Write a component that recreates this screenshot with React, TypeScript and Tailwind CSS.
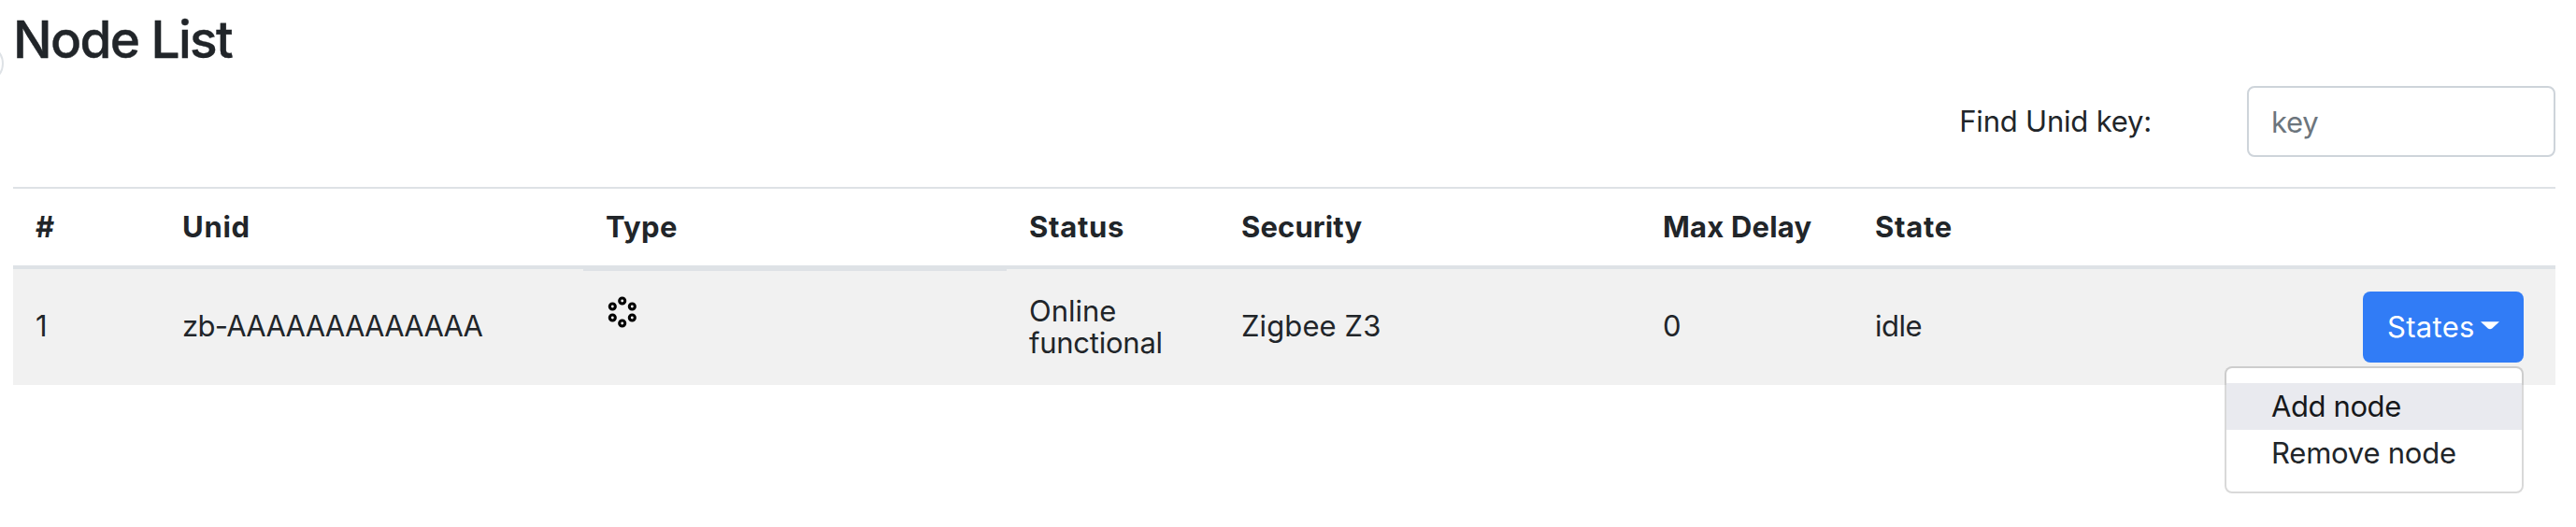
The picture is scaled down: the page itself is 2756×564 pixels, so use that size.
import type { ReactNode } from "react";

const columns = "grid grid-cols-[157px_453px_453px_227px_451px_227px_752px]";

function HeaderCell({ children, className = "" }: { children?: ReactNode; className?: string }) {
  return <div className={`flex items-center px-6 font-bold ${className}`}>{children}</div>;
}

function Cell({ children, className = "" }: { children?: ReactNode; className?: string }) {
  return <div className={`flex items-center px-6 pb-[2px] ${className}`}>{children}</div>;
}

function ZigbeeIcon() {
  const dots = [
    [17.7, 6],
    [28.3, 12],
    [28.3, 24],
    [17.7, 30],
    [7.3, 24],
    [7.3, 12],
  ];
  return (
    <svg width="36" height="36" viewBox="0 0 36 36" fill="none" stroke="#000" strokeWidth="3.1">
      {dots.map(([cx, cy]) => (
        <circle key={`${cx}-${cy}`} cx={cx} cy={cy} r="3" />
      ))}
    </svg>
  );
}

function StatesDropdown() {
  return (
    <div className="relative">
      <button
        type="button"
        className="flex h-[76px] w-[172px] items-center rounded-[8px] bg-[#317cf6] pl-[26px] text-white"
      >
        <span className="tracking-[0.3px]">States</span>
        <svg className="mb-[4px] ml-[6px]" width="20" height="9" viewBox="0 0 20 9" fill="#fff">
          <path d="M0 0.3H20L12.2 7.6Q10 9 7.8 7.6Z" />
        </svg>
      </button>
      <ul className="absolute right-0 top-[80px] flex h-[136px] w-[320px] flex-col rounded-[8px] border-2 border-black/15 bg-white bg-clip-padding pt-4">
        <li className="flex h-[50px] items-center bg-[#e9eaef] pl-[48px] tracking-[-0.4px] text-[#16181b]">Add node</li>
        <li className="flex h-[50px] items-center pl-[48px] tracking-[-0.22px]">Remove node</li>
      </ul>
    </div>
  );
}

export default function App() {
  return (
    <div className="relative h-[564px] w-[2756px] overflow-hidden bg-white pl-[14px] pr-[22px] pt-[10px] font-['Inter',sans-serif] text-[31px] leading-[34px] text-[#212529]">
      <div className="absolute -left-[38px] top-[47px] size-[42px] rounded-full border-2 border-[#dee2e6]" />
      <h1 className="h-[64px] text-[55px] font-medium leading-[64px] tracking-[-1.66px] [-webkit-text-stroke:0.4px_#212529]">
        Node List
      </h1>

      <div className="mt-[18px] flex h-[76px] items-center justify-end">
        <label htmlFor="unid-key" className="mr-[102px] tracking-[-0.2px]">
          Find Unid key:
        </label>
        <input
          id="unid-key"
          placeholder="key"
          className="h-[76px] w-[330px] rounded-[8px] border-2 border-[#ced4da] bg-white pl-[24px] tracking-[-0.29px] placeholder:text-[#6c757d]"
        />
      </div>

      <div className="mt-[32px]">
        <div className={`${columns} h-[88px] border-b-4 border-t-2 border-[#dee2e6]`}>
          <HeaderCell>#</HeaderCell>
          <HeaderCell className="tracking-[0.7px]">Unid</HeaderCell>
          <HeaderCell className="tracking-[0.35px]">Type</HeaderCell>
          <HeaderCell className="tracking-[0.7px]">Status</HeaderCell>
          <HeaderCell className="tracking-[0.13px]">Security</HeaderCell>
          <HeaderCell className="tracking-[0.2px]">Max Delay</HeaderCell>
          <HeaderCell className="tracking-[0.75px]">State</HeaderCell>
        </div>
        <div className={`${columns} h-[124px] bg-[#f1f1f1]`}>
          <Cell>1</Cell>
          <Cell className="tracking-[-0.72px]">zb-AAAAAAAAAAAAA</Cell>
          <div className="border-t-2 border-[#dee2e6] px-6 pt-[26px]">
            <ZigbeeIcon />
          </div>
          <div className="flex flex-col justify-center pl-6">
            <span>Online</span>
            <span className="tracking-[-0.25px]">functional</span>
          </div>
          <Cell className="tracking-[0.1px]">Zigbee Z3</Cell>
          <Cell>0</Cell>
          <div className="flex items-center justify-between pb-[2px] pl-6 pr-[34px]">
            <span className="tracking-[-0.5px]">idle</span>
            <div className="pt-[2px]">
              <StatesDropdown />
            </div>
          </div>
        </div>
      </div>
    </div>
  );
}
